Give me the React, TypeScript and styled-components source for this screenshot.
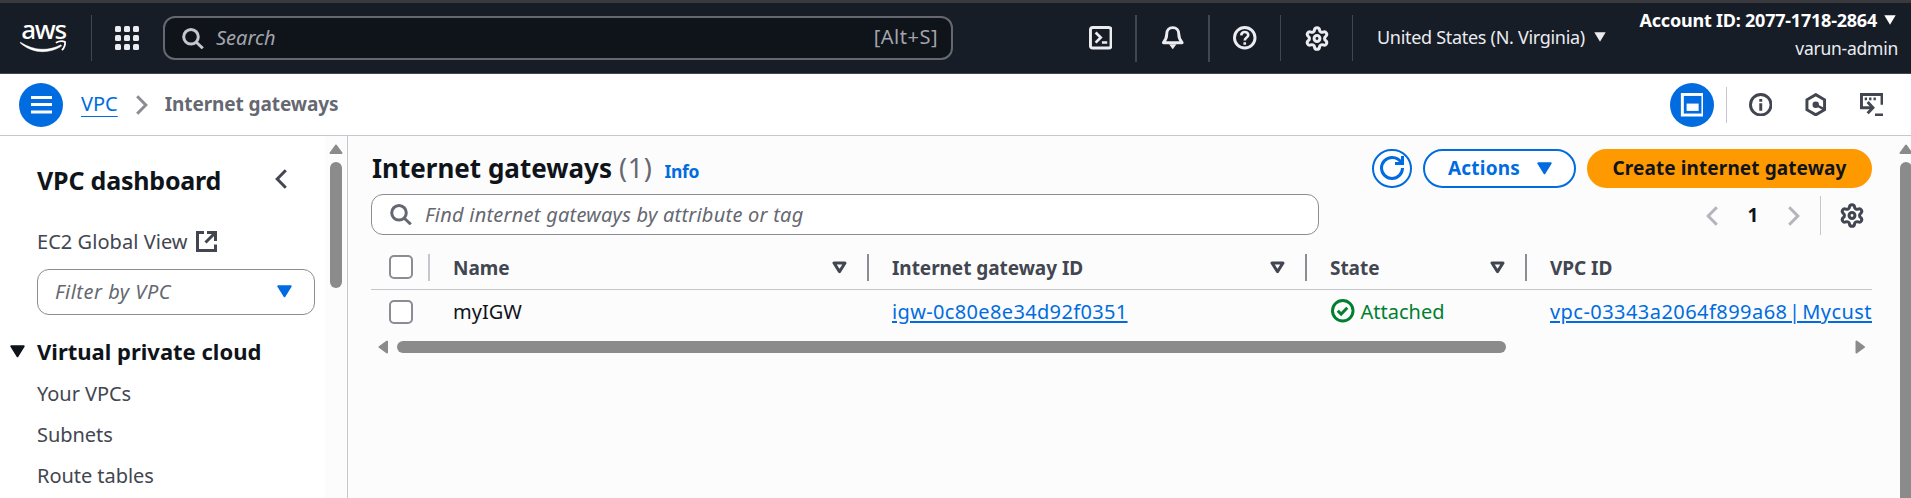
import React from 'react';
import styled, { createGlobalStyle, css } from 'styled-components';

const Global = createGlobalStyle`
  * { box-sizing: border-box; }
  html, body { margin: 0; height: 100%; overflow: hidden; }
  body { font-family: "Noto Sans", "Open Sans", sans-serif; background: #fff; color: #0f141a; }
  svg { display: block; flex: none; }
`;

const Page = styled.div`
  display: flex;
  flex-direction: column;
  width: 100%;
  height: 498px;
  overflow: hidden;
`;

/* ---------- top navigation ---------- */

const TopNav = styled.header`
  display: flex;
  align-items: center;
  flex: none;
  height: 74px;
  padding-left: 20px;
  padding-right: 13px;
  background: #161d26;
  border-top: 3px solid #39393e;
  border-bottom: 1px solid #424650;
  color: #ebebf0;
`;

const NavDivider = styled.div<{ $w?: number }>`
  flex: none;
  width: ${p => p.$w ?? 1}px;
  height: ${p => (p.$w === 2 ? 47 : 46)}px;
  background: #424650;
`;

const LogoWrap = styled.div`
  margin-right: 25px;
`;

const AppsButton = styled.div`
  display: grid;
  grid-template-columns: repeat(3, 6px);
  grid-auto-rows: 6px;
  gap: 3px;
  margin: 0 24px 0 23px;
`;

const AppDot = styled.i`
  background: #ebebf0;
  border-radius: 1.5px;
`;

const NavSearch = styled.div`
  display: flex;
  align-items: center;
  width: 790px;
  height: 44px;
  margin-right: 113px;
  padding: 0 13px 0 17px;
  background: #0f141a;
  border: 2px solid #656871;
  border-radius: 12px;
  color: #c6c6cd;
`;

const NavPlaceholder = styled.span`
  flex: 1;
  margin: -1px 0 0 12px;
  font-size: 20px;
  font-style: italic;
  color: #a4a4ad;
`;

const Shortcut = styled.span`
  margin-top: -3px;
  font-size: 20px;
  letter-spacing: 0.5px;
  color: #a4a4ad;
`;

const NavCell = styled.div<{ $w: number }>`
  display: flex;
  align-items: center;
  justify-content: center;
  flex: none;
  width: ${p => p.$w}px;
  height: 47px;
`;

const Region = styled.div`
  display: flex;
  align-items: center;
  gap: 9px;
  margin-left: 24px;
  margin-top: -3px;
  font-size: 18px;
  letter-spacing: -0.3px;
  white-space: nowrap;
`;

const Account = styled.div`
  margin-left: auto;
  margin-top: -9px;
  line-height: 28px;
  text-align: right;
  white-space: nowrap;
`;

const AccountId = styled.div`
  display: flex;
  align-items: center;
  gap: 7px;
  padding-right: 2px;
  font-size: 18px;
  font-weight: 700;
  letter-spacing: -0.22px;
  color: #fff;
`;

const AccountUser = styled.div`
  font-size: 17.5px;
  letter-spacing: -0.25px;
`;

/* ---------- breadcrumb bar ---------- */

const CrumbBar = styled.div`
  display: flex;
  align-items: center;
  flex: none;
  height: 62px;
  padding: 0 28px 0 19px;
  border-bottom: 1px solid #c6c6cd;
  color: #424650;
`;

const RoundButton = styled.div`
  display: flex;
  align-items: center;
  justify-content: center;
  flex: none;
  width: 44px;
  height: 44px;
  margin-top: 1px;
  border-radius: 50%;
  background: #006ce0;
  color: #fff;
`;

const CrumbLink = styled.a`
  margin: -2px 18px 0 18px;
  font-size: 20px;
  color: #006ce0;
  text-decoration: underline;
  text-decoration-thickness: 1px;
  text-underline-offset: 5px;
`;

const CrumbCurrent = styled.span`
  flex: 1;
  margin: -1px 0 0 17px;
  font-size: 19px;
  font-weight: 700;
  letter-spacing: -0.1px;
  color: #656871;
`;

const CrumbDivider = styled.div`
  width: 1px;
  height: 36px;
  margin: 0 22px 0 12px;
  background: #c6c6cd;
`;

const PanelIcons = styled.div`
  display: flex;
  align-items: center;
  gap: 32px;
`;

/* ---------- body ---------- */

const Body = styled.div`
  display: flex;
  flex: 1;
  min-height: 0;
`;

const Side = styled.aside`
  display: flex;
  flex: none;
  width: 348px;
  border-right: 1px solid #c6c6cd;
`;

const SideContent = styled.nav`
  flex: 1;
  min-width: 0;
  padding: 24px 10px 0 37px;
`;

const SideTitle = styled.div`
  display: flex;
  align-items: center;
  justify-content: space-between;
  height: 40px;
  padding-right: 28px;
  font-size: 25px;
  font-weight: 700;
  letter-spacing: -0.2px;
  white-space: nowrap;
`;

const CollapseButton = styled.div`
  margin-top: -3px;
  color: #424650;
`;

const GlobalLink = styled.a`
  display: flex;
  align-items: center;
  gap: 8px;
  height: 30px;
  margin-top: 26px;
  font-size: 20px;
  letter-spacing: 0.05px;
  color: #424650;
`;

const FilterSelect = styled.div`
  display: flex;
  align-items: center;
  justify-content: space-between;
  height: 46px;
  margin-top: 13px;
  padding: 0 22px 2px 17px;
  border: 1px solid #8c8c94;
  border-radius: 12px;
  font-size: 20px;
  font-style: italic;
  letter-spacing: 0.5px;
  color: #656871;
`;

const SectionTitle = styled.div`
  display: flex;
  align-items: center;
  gap: 12px;
  height: 30px;
  margin: 21px 0 7px -27px;
  font-size: 22px;
  font-weight: 700;
  white-space: nowrap;
`;

const SideLink = styled.a`
  display: flex;
  align-items: center;
  height: 41px;
  font-size: 20px;
  letter-spacing: -0.05px;
  color: #424650;
`;

const VTrack = styled.div<{ $w: number }>`
  flex: none;
  width: ${p => p.$w}px;
  overflow: hidden;
  padding: 8px 0 0 4px;
  background: #fcfcfc;
`;

const VThumb = styled.div<{ $h: number }>`
  width: 12px;
  height: ${p => p.$h}px;
  margin: 8px 0 0 1px;
  border-radius: 6px;
  background: #8b8b8b;
`;

const Main = styled.main`
  display: flex;
  flex: 1;
  min-width: 0;
  background: #fcfcfd;
`;

const Content = styled.section`
  flex: 1;
  min-width: 0;
  padding: 13px 23px 0 23px;
`;

const HeadRow = styled.div`
  display: flex;
  align-items: center;
  gap: 11px;
  height: 39px;
`;

const Heading = styled.div`
  display: flex;
  align-items: baseline;
  flex: 1;
  margin-top: -3px;
  padding-left: 1px;
  font-size: 26px;
`;

const Title = styled.h1`
  margin: 0;
  font-size: 26px;
  font-weight: 700;
`;

const Count = styled.span`
  margin-left: 7px;
  font-size: 27px;
  letter-spacing: 0.6px;
  color: #656871;
`;

const Info = styled.a`
  margin-left: 12px;
  font-size: 17.5px;
  font-weight: 700;
  letter-spacing: -0.3px;
  color: #006ce0;
`;

const Button = styled.button<{ $kind: 'icon' | 'normal' | 'primary' }>`
  display: flex;
  align-items: center;
  justify-content: center;
  flex: none;
  height: 39px;
  padding: 0 0 1px;
  border: 2px solid #006ce0;
  border-radius: 20px;
  background: #fff;
  color: #006ce0;
  font: 700 19px/30px "Noto Sans", sans-serif;
  letter-spacing: 0.2px;
  ${p => p.$kind === 'icon' && css`width: 40px;`}
  ${p => p.$kind === 'normal' && css`width: 153px; gap: 17px; padding-left: 1px;`}
  ${p => p.$kind === 'primary' && css`
    width: 285px;
    border-color: #ff9900;
    background: #ff9900;
    color: #0f141a;
    letter-spacing: 0.1px;
  `}
`;

const ToolRow = styled.div`
  display: flex;
  align-items: center;
  height: 41px;
  margin-top: 6px;
`;

const TableSearch = styled.div`
  display: flex;
  align-items: center;
  width: 948px;
  height: 41px;
  padding: 0 18px;
  gap: 13px;
  border: 1px solid #8c8c94;
  border-radius: 12px;
  background: #fff;
  font-size: 20px;
  font-style: italic;
  letter-spacing: 0.24px;
  color: #656871;
`;

const Pager = styled.div`
  display: flex;
  align-items: center;
  margin-left: auto;
  padding-top: 2px;
  color: #b4b4bb;
`;

const PageNumber = styled.span`
  width: 70px;
  margin-top: -2px;
  text-align: center;
  font-size: 19px;
  font-weight: 700;
  color: #0f141a;
`;

const PagerDivider = styled.div`
  width: 1px;
  height: 39px;
  margin: 0 19px 0 20px;
  background: #c6c6cd;
`;

const PagerGear = styled.div`
  margin-right: 8px;
  color: #424650;
`;

const Table = styled.div`
  margin-top: 12px;
  overflow: hidden;
`;

const TableRow = styled.div<{ $head?: boolean }>`
  display: grid;
  grid-template-columns: 59px 439px 438px 220px 345px;
  height: 43px;
  ${p => p.$head && css`border-bottom: 1px solid #c6c6cd;`}
`;

const Cell = styled.div`
  display: flex;
  align-items: center;
  min-width: 0;
  padding-left: 23px;
  padding-bottom: 1px;
  overflow: hidden;
  font-size: 20px;
  white-space: nowrap;
`;

const HeadCell = styled(Cell)`
  justify-content: space-between;
  font-size: 19px;
  font-weight: 700;
  letter-spacing: -0.05px;
  color: #424650;
`;

const CheckCell = styled(Cell)<{ $head?: boolean }>`
  padding-left: 18px;
  padding-bottom: ${p => (p.$head ? 1 : 0)}px;
  justify-content: space-between;
`;

const ColumnEnd = styled.div`
  display: flex;
  align-items: center;
  gap: 20px;
`;

const ColumnRule = styled.i<{ $light?: boolean }>`
  width: 2px;
  height: 27px;
  background: ${p => (p.$light ? '#c6c6cd' : '#8c8c94')};
`;

const Checkbox = styled.i<{ $head?: boolean }>`
  width: 24px;
  height: 24px;
  margin-top: ${p => (p.$head ? -2 : 0)}px;
  border: 2px solid #8c8c94;
  border-radius: 5px;
  background: #fff;
`;

const TableLink = styled.a<{ $wide?: boolean }>`
  color: #006ce0;
  letter-spacing: ${p => (p.$wide ? 0.45 : 0.35)}px;
  word-spacing: ${p => (p.$wide ? -4 : 0)}px;
  text-decoration: underline;
  text-decoration-thickness: 2px;
  text-underline-offset: 2px;
`;

const Status = styled.span`
  display: flex;
  align-items: center;
  gap: 6px;
  padding-left: 1px;
  color: #00802f;
`;

const HScroll = styled.div`
  display: flex;
  align-items: center;
  justify-content: space-between;
  height: 14px;
  margin-top: 7px;
  padding: 0 7px;
`;

const HThumb = styled.div`
  width: 1109px;
  height: 12px;
  margin: 0 auto 0 9px;
  border-radius: 6px;
  background: #8b8b8b;
`;

/* ---------- icons ---------- */

type IconProps = { size?: number; children: React.ReactNode; sw?: number };
const Icon = ({ size = 23.5, sw = 2, children }: IconProps) => (
  <svg width={size} height={size} viewBox="0 0 16 16" fill="none" stroke="currentColor" strokeWidth={sw}>
    {children}
  </svg>
);

const SearchIcon = () => (
  <svg width="22" height="21" viewBox="0 0 22 21" fill="none" stroke="currentColor" strokeWidth="3">
    <circle cx="9" cy="8.8" r="7.3" />
    <path d="M14 14l6.8 6.3" />
  </svg>
);

const Gear = () => (
  <svg width="24" height="25" viewBox="0.9 0.6 22.2 22.8" fill="none" stroke="currentColor" strokeWidth="2.8" strokeLinejoin="round">
    <path d="M9.671 4.136a2.34 2.34 0 0 1 4.659 0 2.34 2.34 0 0 0 3.319 1.915 2.34 2.34 0 0 1 2.33 4.033 2.34 2.34 0 0 0 0 3.831 2.34 2.34 0 0 1-2.33 4.033 2.34 2.34 0 0 0-3.319 1.915 2.34 2.34 0 0 1-4.659 0 2.34 2.34 0 0 0-3.32-1.915 2.34 2.34 0 0 1-2.33-4.033 2.34 2.34 0 0 0 0-3.831A2.34 2.34 0 0 1 6.35 6.051a2.34 2.34 0 0 0 3.319-1.915" />
    <circle cx="12" cy="12" r="2.7" />
  </svg>
);

const Caret = ({ color = 'currentColor', hollow = false }: { color?: string; hollow?: boolean }) => (
  <svg width="15" height="13" viewBox="0 0 15 13" fill={hollow ? 'none' : color} stroke={color} strokeWidth={hollow ? 3 : 2} strokeLinejoin="round">
    <path d={hollow ? 'M2 2h11L7.5 10.6z' : 'M1.3 1.3h12.4L7.5 11.3z'} />
  </svg>
);

const SmallCaret = () => (
  <svg width="12" height="10" viewBox="0 0 12 10" fill="currentColor">
    <path d="M0.3 0.3h11.4L6 9.8z" />
  </svg>
);

const Angle = ({ left = false }: { left?: boolean }) => (
  <svg width="12" height="20" viewBox="0 0 12 20" fill="none" stroke="currentColor" strokeWidth="3">
    <path d={left ? 'M10.8 1.2L2.2 10l8.6 8.8' : 'M1.2 1.2L9.8 10l-8.6 8.8'} />
  </svg>
);

const arrows = {
  up: 'M1.5 9h11L7 1.5z',
  left: 'M9 1.5v11L1.5 7z',
  right: 'M1.5 1.5v11L9 7z',
};
const ScrollArrow = ({ dir }: { dir: 'up' | 'left' | 'right' }) => {
  const [w, h] = dir === 'up' ? [14, 10] : [10, 14];
  return (
    <svg width={w} height={h} viewBox={`0 0 ${w} ${h}`} fill="#8b8b8b" stroke="#8b8b8b" strokeWidth="2" strokeLinejoin="round">
      <path d={arrows[dir]} />
    </svg>
  );
};

const Logo = () => (
  <svg width="46" height="32" viewBox="0 0 46 32" overflow="visible">
    <text x="1.2" y="16.5" fill="#fff" fontFamily="Noto Sans, sans-serif" fontSize="26" fontWeight="500" letterSpacing="-1.3">aws</text>
    <path d="M.4 20.2c13 8.600 28 9.300 40.500 2.600l.7 1.300C28.500 32.300 12 31.500.2 20.900z" fill="#fff" stroke="#fff" strokeWidth=".5" />
    <path d="M35.800 20.700c3.500-1.700 7-1.700 9.200-.9.400 2.800-.4 5.500-3 8.300" fill="none" stroke="#fff" strokeWidth="1.800" />
  </svg>
);

/* ---------- page ---------- */

const columns = ['Name', 'Internet gateway ID', 'State'];
const sideLinks = ['Your VPCs', 'Subnets', 'Route tables'];

export default function App() {
  return (
    <Page>
      <Global />
      <TopNav>
        <LogoWrap><Logo /></LogoWrap>
        <NavDivider />
        <AppsButton>{Array.from({ length: 9 }, (_, i) => <AppDot key={i} />)}</AppsButton>
        <NavSearch>
          <SearchIcon />
          <NavPlaceholder>Search</NavPlaceholder>
          <Shortcut>[Alt+S]</Shortcut>
        </NavSearch>
        <NavCell $w={69}>
          <Icon>
            <rect x="1" y="1" width="14" height="14" rx="1.6" />
            <path d="M4.500 4.400L8 7.800l-3.500 3.500M8.800 11.200h3.600" strokeWidth="1.800" />
          </Icon>
        </NavCell>
        <NavDivider $w={2} />
        <NavCell $w={71}>
          <Icon>
            <path d="M8 1.100c-2.600 0-4.100 1.900-4.100 4.300 0 3-.8 4.200-2.300 6h12.800c-1.500-1.800-2.300-3-2.300-6C12.100 3 10.600 1.100 8 1.100z" strokeLinejoin="round" />
            <path d="M5.500 12.500h5L8 15.800z" fill="currentColor" stroke="none" />
          </Icon>
        </NavCell>
        <NavDivider $w={2} />
        <NavCell $w={70}>
          <Icon>
            <circle cx="8" cy="8" r="7" />
            <path d="M5.600 6.400C5.700 4.900 6.700 4.100 8 4.100s2.400.8 2.400 2c0 1.700-2.400 1.700-2.400 3.700M8 11v1.700" strokeWidth="1.800" />
          </Icon>
        </NavCell>
        <NavDivider />
        <NavCell $w={71}><Gear /></NavCell>
        <NavDivider />
        <Region>United States (N. Virginia)<SmallCaret /></Region>
        <Account>
          <AccountId>Account ID: 2077-1718-2864<SmallCaret /></AccountId>
          <AccountUser>varun-admin</AccountUser>
        </Account>
      </TopNav>

      <CrumbBar>
        <RoundButton>
          <svg width="21" height="18" viewBox="0 0 21 18" fill="currentColor">
            <path d="M0 0h21v3H0zM0 7h21v3H0zM0 14.500h21v3H0z" />
          </svg>
        </RoundButton>
        <CrumbLink>VPC</CrumbLink>
        <svg width="12" height="20" viewBox="0 0 12 20" fill="none" stroke="#8c8c94" strokeWidth="3">
          <path d="M1.200 1.200L9.800 10l-8.600 8.800" />
        </svg>
        <CrumbCurrent>Internet gateways</CrumbCurrent>
        <RoundButton>
          <Icon>
            <rect x="1.600" y="1" width="14" height="14" />
            <path d="M4.500 7.200h8.200v5H4.500z" fill="currentColor" stroke="none" />
          </Icon>
        </RoundButton>
        <CrumbDivider />
        <PanelIcons>
          <Icon>
            <circle cx="8" cy="8" r="7" />
            <path d="M8 7v5M8 4v2" />
          </Icon>
          <Icon>
            <path d="M8 1.100l6 3.500v6.800l-6 3.500-6-3.500V4.600z" />
            <circle cx="8" cy="8" r="2.200" fill="currentColor" stroke="none" />
            <path d="M8 8l5.500 3" strokeWidth="1.600" />
          </Icon>
          <Icon>
            <path d="M15 8V1H1v9h7" />
            <path d="M5.200 6.200L8.800 10l-3.600 3.800M10.200 15H16" />
            <path d="M3.200 4h1.600M6.200 4h1.600M9.200 4h1.600" />
          </Icon>
        </PanelIcons>
      </CrumbBar>

      <Body>
        <Side>
          <SideContent>
            <SideTitle>VPC dashboard<CollapseButton><Angle left /></CollapseButton></SideTitle>
            <GlobalLink>
              EC2 Global View
              <svg width="21" height="21" viewBox="0 0 21 21" fill="none" stroke="currentColor" strokeWidth="3">
                <path d="M8 1.500H1.500v18h18V13.500" />
                <path d="M11 1.500h8.500V10M19.500 1.500L9.500 11.500" />
              </svg>
            </GlobalLink>
            <FilterSelect>Filter by VPC<Caret color="#006ce0" /></FilterSelect>
            <SectionTitle><Caret />Virtual private cloud</SectionTitle>
            {sideLinks.map(label => <SideLink key={label}>{label}</SideLink>)}
          </SideContent>
          <VTrack $w={22}>
            <ScrollArrow dir="up" />
            <VThumb $h={126} />
          </VTrack>
        </Side>

        <Main>
          <Content>
            <HeadRow>
              <Heading>
                <Title>Internet gateways</Title>
                <Count>(1)</Count>
                <Info>Info</Info>
              </Heading>
              <Button $kind="icon">
                <Icon size={24}>
                  <path d="M15 8c0 3.870-3.130 7-7 7s-7-3.130-7-7 3.130-7 7-7c2.790 0 5.200 1.400 6.330 3.800" />
                  <path d="M10 5h5V0" />
                </Icon>
              </Button>
              <Button $kind="normal">Actions<Caret /></Button>
              <Button $kind="primary">Create internet gateway</Button>
            </HeadRow>
            <ToolRow>
              <TableSearch><SearchIcon />Find internet gateways by attribute or tag</TableSearch>
              <Pager>
                <Angle left />
                <PageNumber>1</PageNumber>
                <Angle />
                <PagerDivider />
                <PagerGear><Gear /></PagerGear>
              </Pager>
            </ToolRow>

            <Table>
              <TableRow $head>
                <CheckCell $head><Checkbox $head /><ColumnRule $light /></CheckCell>
                {columns.map(name => (
                  <HeadCell key={name}>
                    {name}
                    <ColumnEnd><Caret hollow /><ColumnRule /></ColumnEnd>
                  </HeadCell>
                ))}
                <HeadCell>VPC ID</HeadCell>
              </TableRow>
              <TableRow>
                <CheckCell><Checkbox /></CheckCell>
                <Cell>myIGW</Cell>
                <Cell><TableLink>igw-0c80e8e34d92f0351</TableLink></Cell>
                <Cell>
                  <Status>
                    <Icon>
                      <circle cx="8" cy="8" r="7" />
                      <path d="M4.600 8l2.300 2.300 4.200-4.300" />
                    </Icon>
                    Attached
                  </Status>
                </Cell>
                <Cell><TableLink $wide>vpc-03343a2064f899a68 | Mycustomvpc</TableLink></Cell>
              </TableRow>
            </Table>
            <HScroll>
              <ScrollArrow dir="left" />
              <HThumb />
              <ScrollArrow dir="right" />
            </HScroll>
          </Content>
          <VTrack $w={16}>
            <ScrollArrow dir="up" />
            <VThumb $h={400} />
          </VTrack>
        </Main>
      </Body>
    </Page>
  );
}
